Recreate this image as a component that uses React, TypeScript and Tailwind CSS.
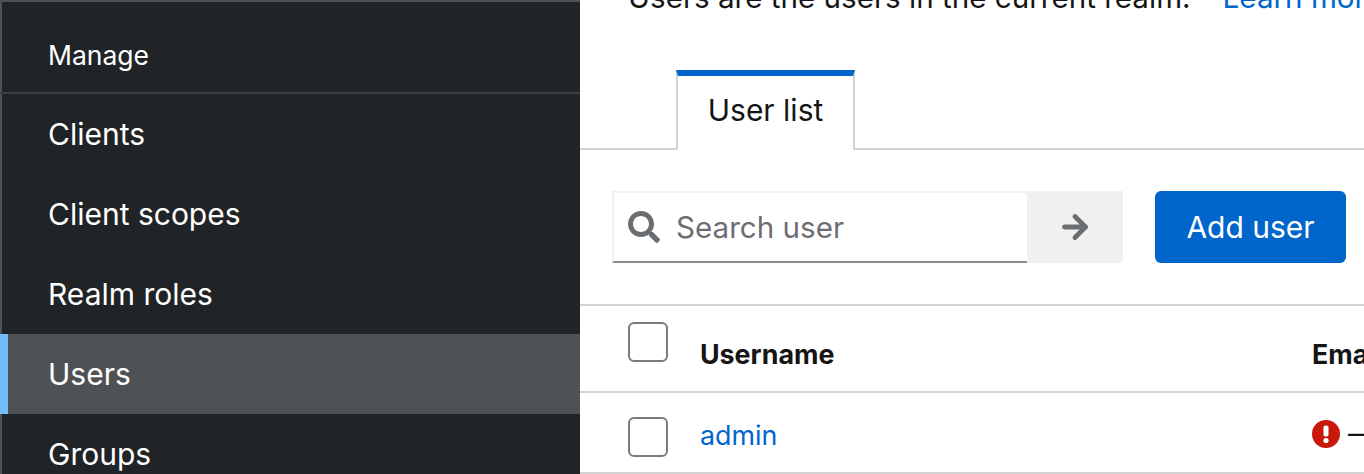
import { ArrowRight } from 'lucide-react';
import { FaSearch } from 'react-icons/fa';

const navItems = ['Clients', 'Client scopes', 'Realm roles', 'Users', 'Groups'];

function Checkbox() {
  return <div className="h-10 w-10 rounded-[6px] border-2 border-[#797b7e] bg-white" />;
}

function Sidebar() {
  return (
    <aside className="h-full w-[580px] shrink-0 overflow-hidden border-t-2 border-[#4f5255] bg-[#212427] text-white">
      <div className="flex h-[90px] items-center border-l-2 border-[#4f5255] pl-[46px] pt-[18px] text-[26.5px]">Manage</div>
      <div className="h-0.5 bg-[#3c3f42]" />
      {navItems.map((item) => (
        <div
          key={item}
          className={
            item === 'Users'
              ? 'flex h-20 items-center border-l-8 border-[#73bcf7] bg-[#4f5255] pl-10 text-[30px]'
              : 'flex h-20 items-center border-l-2 border-[#4f5255] pl-[46px] text-[30px]'
          }
        >
          {item}
        </div>
      ))}
    </aside>
  );
}

function UserList() {
  return (
    <main className="h-full min-w-0 flex-1 overflow-hidden bg-white text-[#151515]">
      <div className="-mt-[21px] flex h-9 items-center whitespace-nowrap pl-12 text-[29.6px]">
        <span>Users are the users in the current realm.</span>
        <span className="ml-8 text-[#0066cc]">Learn more</span>
      </div>

      <div className="mt-[55px] flex h-20 border-b-2 border-[#d2d2d2] pl-24">
        <div className="-mb-0.5 flex h-20 w-[179px] items-center justify-center border-x-2 border-t-[6px] border-[#d2d2d2] border-t-[#0066cc] bg-white pb-1.5 text-[30px]">
          User list
        </div>
      </div>

      <div className="mt-[41px] flex h-[72px] pl-8">
        <div className="flex w-[415px] items-center border-t-2 border-l-2 border-b-2 border-[#f0f0f0] border-b-[#8a8d90]">
          <FaSearch size={32} className="ml-3.5 text-[#6a6e73]" />
          <span className="ml-4 text-[29.6px] text-[#6a6e73]">Search user</span>
        </div>
        <div className="flex w-24 items-center justify-center bg-[#f0f0f0]">
          <ArrowRight size={36} strokeWidth={3.2} className="text-[#6a6e73]" />
        </div>
        <button className="ml-8 h-[72px] w-[191px] rounded-[6px] bg-[#0066cc] text-[30px] text-white">Add user</button>
      </div>

      <div className="mt-[41px] flex h-[87px] border-t-2 border-[#d2d2d2]">
        <div className="w-[120px] shrink-0 pl-12 pt-4">
          <Checkbox />
        </div>
        <div className="w-[612px] shrink-0 pt-[30px] text-[26.8px] font-bold leading-9">Username</div>
        <div className="shrink-0 pt-[30px] text-[26.8px] font-bold leading-9">Email</div>
      </div>

      <div className="flex h-[83px] border-y-2 border-[#d2d2d2]">
        <div className="w-[120px] shrink-0 pl-12 pt-6">
          <Checkbox />
        </div>
        <div className="w-[612px] shrink-0 pt-6 text-[26.8px] leading-9 text-[#0066cc]">admin</div>
        <div className="flex shrink-0 items-center gap-2 pt-0.5 text-[26.8px]">
          <svg width="28" height="28" viewBox="0 0 28 28">
            <circle cx="14" cy="14" r="14" fill="#c9190b" />
            <rect x="11.5" y="5.5" width="5" height="11" rx="2" fill="#fff" />
            <circle cx="14" cy="20.5" r="2.6" fill="#fff" />
          </svg>
          <span>—</span>
        </div>
      </div>
    </main>
  );
}

export default function App() {
  return (
    <div className="flex h-[474px] w-[1364px] overflow-hidden font-['Inter','Liberation_Sans',sans-serif]">
      <Sidebar />
      <UserList />
    </div>
  );
}
